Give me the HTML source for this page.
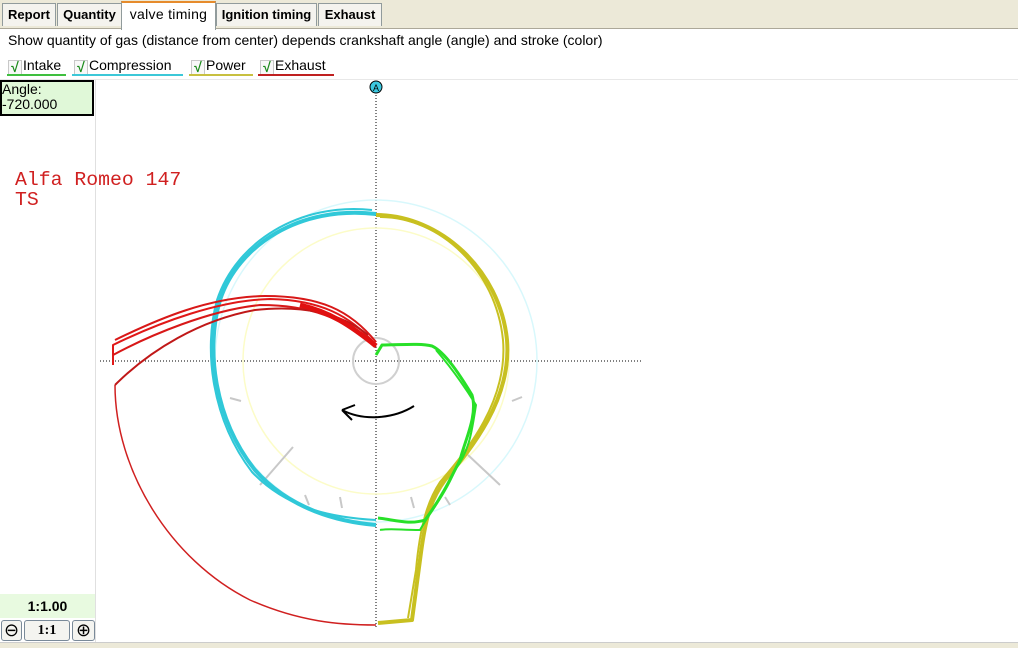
<!DOCTYPE html>
<html><head><style>
body{margin:0;width:1018px;height:647px;overflow:hidden;background:#fff;font-family:"Liberation Sans",Arial,sans-serif;position:relative}
.top{position:absolute;left:0;top:0;width:1018px;height:28px;background:#ece9d8;border-bottom:1px solid #aca899}
.tab{position:absolute;top:3px;height:22px;border:1px solid #919b9c;border-bottom:none;background:#f4f3ee;font-weight:bold;font-size:13px;line-height:22px;text-align:center}
.tab.act{top:1px;height:27px;background:#fff;border-top:2px solid #e68b2c;font-weight:normal;font-size:14px;letter-spacing:0.3px}
.txt{position:absolute;font-size:14px;color:#000}
.cb{position:absolute;top:56px;font-size:14px;height:20px;line-height:18px}
.cb i{display:inline-block;width:12px;height:13px;border:1px solid #c8c8c8;background:#f8f8f8;color:#1a8a1a;font-style:normal;font-weight:bold;font-size:14px;line-height:13px;text-align:center;vertical-align:-2px;margin-right:1px}
.left{position:absolute;left:0;top:80px;width:95px;height:567px;border-right:1px solid #e0e0e0}
</style></head><body>
<div class="top">
<div class="tab" style="left:2px;width:52px">Report</div>
<div class="tab" style="left:57px;width:63px">Quantity</div>
<div class="tab act" style="left:121px;width:93px">valve timing</div>
<div class="tab" style="left:216px;width:99px">Ignition timing</div>
<div class="tab" style="left:318px;width:62px">Exhaust</div>
</div>
<div class="txt" style="left:8px;top:32px">Show quantity of gas (distance from center) depends crankshaft angle (angle) and stroke (color)</div>
<div class="cb" style="left:8px"><i>√</i>Intake</div><div style="position:absolute;left:7px;top:74px;width:59px;height:2px;background:#3fbf3f"></div>
<div class="cb" style="left:74px"><i>√</i>Compression</div><div style="position:absolute;left:72px;top:74px;width:111px;height:2px;background:#3cc8d8"></div>
<div class="cb" style="left:191px"><i>√</i>Power</div><div style="position:absolute;left:189px;top:74px;width:64px;height:2px;background:#c8c040"></div>
<div class="cb" style="left:260px"><i>√</i>Exhaust</div><div style="position:absolute;left:258px;top:74px;width:76px;height:2px;background:#c02020"></div>
<div style="position:absolute;left:0;top:79px;width:1018px;height:1px;background:#e8e8e8"></div>
<div class="left"></div>
<div style="position:absolute;left:0;top:80px;width:90px;height:32px;background:#e0f8d8;border:2px solid #000;font-size:14px;line-height:15px">Angle:<br>-720.000</div>
<div style="position:absolute;left:15px;top:170px;font-family:'Liberation Mono',monospace;font-size:19.8px;color:#d02020;line-height:20px">Alfa Romeo 147<br>TS</div>
<div style="position:absolute;left:0;top:594px;width:95px;height:24px;background:#e8fae0;font-weight:bold;font-size:14px;line-height:24px;text-align:center">1:1.00</div>
<div style="position:absolute;left:1px;top:620px;width:19px;height:19px;border:1px solid #7a8a99;border-radius:3px;background:#f4f4f0;text-align:center;font-size:18px;line-height:18px">⊖</div>
<div style="position:absolute;left:24px;top:620px;width:44px;height:19px;border:1px solid #7a8a99;border-radius:3px;background:#f4f4f0;text-align:center;font-family:'Liberation Serif',serif;font-weight:bold;font-size:14px;line-height:19px">1:1</div>
<div style="position:absolute;left:72px;top:620px;width:21px;height:19px;border:1px solid #7a8a99;border-radius:3px;background:#f4f4f0;text-align:center;font-size:18px;line-height:18px">⊕</div>
<div style="position:absolute;left:0;top:642px;width:1018px;height:5px;background:#ece9d8;border-top:1px solid #ccc"></div>
<svg style="position:absolute;left:0;top:0" width="1018" height="647">
<line x1="376" y1="95" x2="376" y2="628" stroke="#000" stroke-dasharray="1,2"/>
<line x1="100" y1="361" x2="642" y2="361" stroke="#000" stroke-dasharray="1,2"/>
<circle cx="376" cy="87" r="6" fill="#3cc8e0" stroke="#000"/>
<text x="376" y="91" font-size="9" text-anchor="middle" font-family="Liberation Sans">A</text>
<circle cx="376" cy="361" r="161" fill="none" stroke="#d8f8fc" stroke-width="1.5"/>
<circle cx="376" cy="361" r="133" fill="none" stroke="#fcfcc8" stroke-width="1.5"/>
<circle cx="376" cy="361" r="23" fill="none" stroke="#d0d0d0" stroke-width="2"/>
<g stroke="#c8c8c8" stroke-width="2">
<line x1="260" y1="485" x2="293" y2="447"/><line x1="468" y1="455" x2="500" y2="485"/>
<line x1="230" y1="398" x2="241" y2="401"/><line x1="512" y1="401" x2="522" y2="397"/>
<line x1="305" y1="495" x2="309" y2="505"/><line x1="340" y1="497" x2="342" y2="508"/>
<line x1="411" y1="497" x2="414" y2="508"/><line x1="445" y1="497" x2="450" y2="505"/>
</g>
<g fill="none" stroke-width="2" stroke-linejoin="round">
<path d="M376,214 C300,205 238,245 220,300 C205,350 215,420 255,470 C290,510 340,522 376,525" stroke="#30c8d8" stroke-width="4"/>
<path d="M372,210 C300,202 236,242 217,300 C203,350 212,420 252,472 C290,512 340,518 376,520" stroke="#30c8d8"/>
<path d="M376,215 C440,215 500,270 507,340 C512,400 470,450 445,480 C430,500 425,520 420,560 L412,620 L378,623" stroke="#c8c020" stroke-width="4"/>
<path d="M380,217 C440,217 496,270 503,340 C508,400 468,450 440,482 C428,500 420,525 416,570 L408,618" stroke="#c8c020"/>
<path d="M376,345 C350,315 320,300 270,299 C220,300 160,322 113,345 L113,365" stroke="#e01818" stroke-width="2"/>
<path d="M376,342 C350,310 320,296 265,296 C210,297 160,318 115,340" stroke="#d81818"/>
<path d="M376,347 C345,318 310,305 260,305 C210,310 150,335 113,355" stroke="#d81818"/>
<path d="M368,335 C340,312 300,305 255,310 C200,320 150,350 115,385" stroke="#c01818"/>
<path d="M376,346 C350,325 330,312 300,305" stroke="#e01010" stroke-width="5"/>
<path d="M115,385 C115,470 170,560 250,600 C300,622 340,625 376,625" stroke="#d02020" stroke-width="1.5"/>
<path d="M376,355 L382,345 C400,345 420,343 432,346 C445,352 460,375 472,395 C478,415 465,440 460,460 C450,480 440,500 425,520 C410,525 395,520 378,518" stroke="#28e028" stroke-width="3"/>
<path d="M436,350 C455,372 468,392 476,405 C472,430 470,450 455,470 C445,495 430,512 420,530 C400,530 390,528 380,530" stroke="#28e028"/>
<path d="M414,406 C395,418 365,422 342,410 M342,410 L355,405 M342,410 L352,420" stroke="#000" stroke-width="2"/>
</g>
</svg>
</body></html>
